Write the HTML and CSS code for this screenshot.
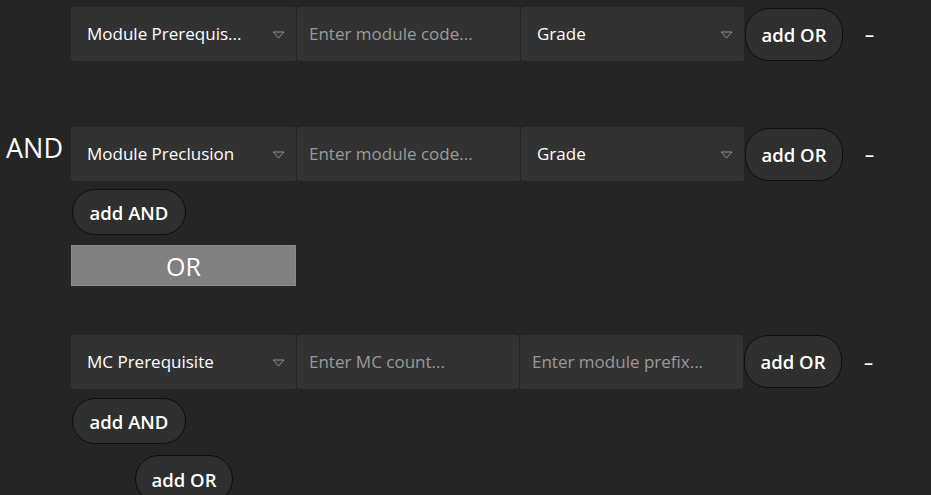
FILE: index.html
```html
<!DOCTYPE html>
<html>
<head>
<meta charset="utf-8">
<link rel="stylesheet" href="styles.css">
</head>
<body>
<div class="page">
  <div class="row r1">
    <div class="label"></div>
    <div class="select w-first"><span class="val">Module Prerequis...</span><svg class="caret" width="13" height="8" viewBox="0 0 13 8"><polygon points="1,1 12,1 6.5,7" /></svg></div>
    <div class="input w-mid"><span class="ph">Enter module code...</span></div>
    <div class="select w-last"><span class="val">Grade</span><svg class="caret" width="13" height="8" viewBox="0 0 13 8"><polygon points="1,1 12,1 6.5,7" /></svg></div>
    <button class="pill or-btn">add OR</button>
    <span class="minus">–</span>
  </div>

  <div class="row r2">
    <div class="label">AND</div>
    <div class="select w-first"><span class="val">Module Preclusion</span><svg class="caret" width="13" height="8" viewBox="0 0 13 8"><polygon points="1,1 12,1 6.5,7" /></svg></div>
    <div class="input w-mid"><span class="ph">Enter module code...</span></div>
    <div class="select w-last"><span class="val">Grade</span><svg class="caret" width="13" height="8" viewBox="0 0 13 8"><polygon points="1,1 12,1 6.5,7" /></svg></div>
    <button class="pill or-btn">add OR</button>
    <span class="minus">–</span>
  </div>
  <div class="sub">
    <button class="pill and-btn b2">add AND</button>
    <div class="or-box">OR</div>
  </div>

  <div class="row r3">
    <div class="label"></div>
    <div class="select w-first"><span class="val">MC Prerequisite</span><svg class="caret" width="13" height="8" viewBox="0 0 13 8"><polygon points="1,1 12,1 6.5,7" /></svg></div>
    <div class="input w-mid2"><span class="ph">Enter MC count...</span></div>
    <div class="input w-last2"><span class="ph">Enter module prefix...</span></div>
    <button class="pill or-btn">add OR</button>
    <span class="minus m3">–</span>
  </div>
  <div class="sub">
    <button class="pill and-btn b3">add AND</button>
    <button class="pill or-btn b4">add OR</button>
  </div>
</div>
</body>
</html>
```
FILE: styles.css
```css
html, body {
  margin: 0;
  padding: 0;
  background: #252525;
  overflow: hidden;
}
.page {
  width: 931px;
  height: 495px;
  font-family: "Open Sans", "Noto Sans", sans-serif;
  color: #ffffff;
  display: flex;
  flex-direction: column;
  padding-top: 7px;
  box-sizing: border-box;
}
.row {
  display: flex;
  align-items: flex-start;
  height: 54px;
}
.r2 { margin-top: 66px; }
.r3 { margin-top: 49px; }
.label {
  width: 71px;
  flex: none;
  box-sizing: border-box;
  padding-left: 6px;
  padding-top: 3px;
  font-size: 27px;
  line-height: 36px;
  font-weight: 500;
}
.select, .input {
  height: 54px;
  background: #323232;
  border-radius: 3px;
  display: flex;
  align-items: center;
  box-sizing: border-box;
  padding-left: 16px;
  padding-right: 11px;
  font-size: 17px;
  margin-right: 1px;
  flex: none;
}
.w-first { width: 225px; }
.w-mid { width: 223px; }
.w-last { width: 223px; }
.w-mid2 { width: 222px; }
.w-last2 { width: 223px; padding-left: 12px; }
.input { padding-left: 12px; }
.val { flex: 1; color: #ffffff; white-space: nowrap; margin-top: -1px; }
.ph { color: #9a9a9a; white-space: nowrap; margin-top: -1px; }
.caret { flex: none; margin-top: 1px; }
.caret polygon { fill: #3a3a3a; stroke: #8c8c8c; stroke-width: 1; }
.pill {
  font-family: "Open Sans", "Noto Sans", sans-serif;
  font-weight: 600;
  font-size: 18.5px;
  color: #ffffff;
  background: #2f2f2f;
  border: 1px solid #0e0e0e;
  border-radius: 24px;
  padding: 0;
  margin: 0;
  flex: none;
}
.or-btn {
  width: 98px;
  height: 53px;
  margin-top: 1px;
}
.r3 .or-btn { margin-top: 0; width: 98px; height: 53px; }
.minus {
  margin-left: 22px;
  font-size: 18px;
  font-weight: 600;
  line-height: 54px;
  width: 10px;
}
.m3 { margin-left: 22px; }
.sub {
  display: flex;
  flex-direction: column;
  align-items: flex-start;
  padding-left: 72px;
}
.and-btn {
  width: 114px;
  height: 46px;
}
.b2 { margin-top: 8px; }
.b3 { margin-top: 9px; }
.b4 { margin-top: 11px; margin-left: 63px; width: 98px; height: 48px; }
.or-box {
  margin-top: 10px;
  margin-left: -1px;
  width: 225px;
  height: 41px;
  box-sizing: border-box;
  background: #808080;
  border: 1px solid #8a8a8a;
  display: flex;
  align-items: center;
  justify-content: center;
  font-size: 25px;
  font-weight: 500;
  color: #ffffff;
}
```
